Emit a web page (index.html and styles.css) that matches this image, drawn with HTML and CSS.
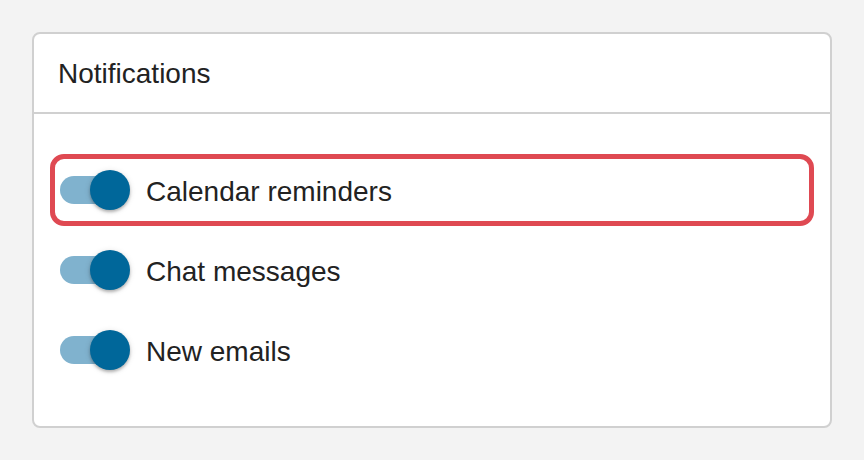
FILE: index.html
```html
<!DOCTYPE html>
<html>
<head>
<meta charset="utf-8">
<link rel="stylesheet" href="styles.css">
</head>
<body>
<section class="card">
  <header class="card-header">Notifications</header>
  <ul class="list">
    <li class="row focused">
      <span class="switch"><span class="track"></span><span class="thumb"></span></span>
      <span class="label">Calendar reminders</span>
    </li>
    <li class="row">
      <span class="switch"><span class="track"></span><span class="thumb"></span></span>
      <span class="label">Chat messages</span>
    </li>
    <li class="row">
      <span class="switch"><span class="track"></span><span class="thumb"></span></span>
      <span class="label">New emails</span>
    </li>
  </ul>
</section>
</body>
</html>
```
FILE: styles.css
```css
html, body {
  margin: 0;
  padding: 0;
  background: #f3f3f3;
}
body {
  padding: 32px;
  font-family: "Liberation Sans", Arial, sans-serif;
  color: #222;
}
.card {
  width: 796px;
  height: 392px;
  background: #fff;
  border: 2px solid #d0d0d0;
  border-radius: 8px;
  box-sizing: content-box;
}
.card-header {
  display: flex;
  align-items: center;
  padding: 2px 24px 0 24px;
  font-size: 28px;
  border-bottom: 2px solid #d0d0d0;
  box-sizing: border-box;
  height: 80px;
}
.list {
  list-style: none;
  margin: 0;
  padding: 45px 21px 0 21px;
  display: flex;
  flex-direction: column;
  gap: 18px;
}
.row {
  height: 62px;
  display: flex;
  align-items: center;
  padding-left: 5px;
  border-radius: 9px;
}
.row.focused {
  outline: 5px solid #df4952;
}
.switch {
  position: relative;
  width: 70px;
  height: 40px;
  display: flex;
  align-items: center;
  margin-right: 16px;
}
.track {
  width: 68px;
  height: 28px;
  border-radius: 14px;
  background: #80b2ce;
}
.thumb {
  position: absolute;
  left: 30px;
  top: 0;
  width: 40px;
  height: 40px;
  border-radius: 50%;
  background: #00679a;
  box-shadow: 0 2px 3px rgba(0,0,0,0.25), 0 1px 6px rgba(0,0,0,0.12);
}
.label {
  font-size: 28px;
  padding-top: 3px;
}
```
